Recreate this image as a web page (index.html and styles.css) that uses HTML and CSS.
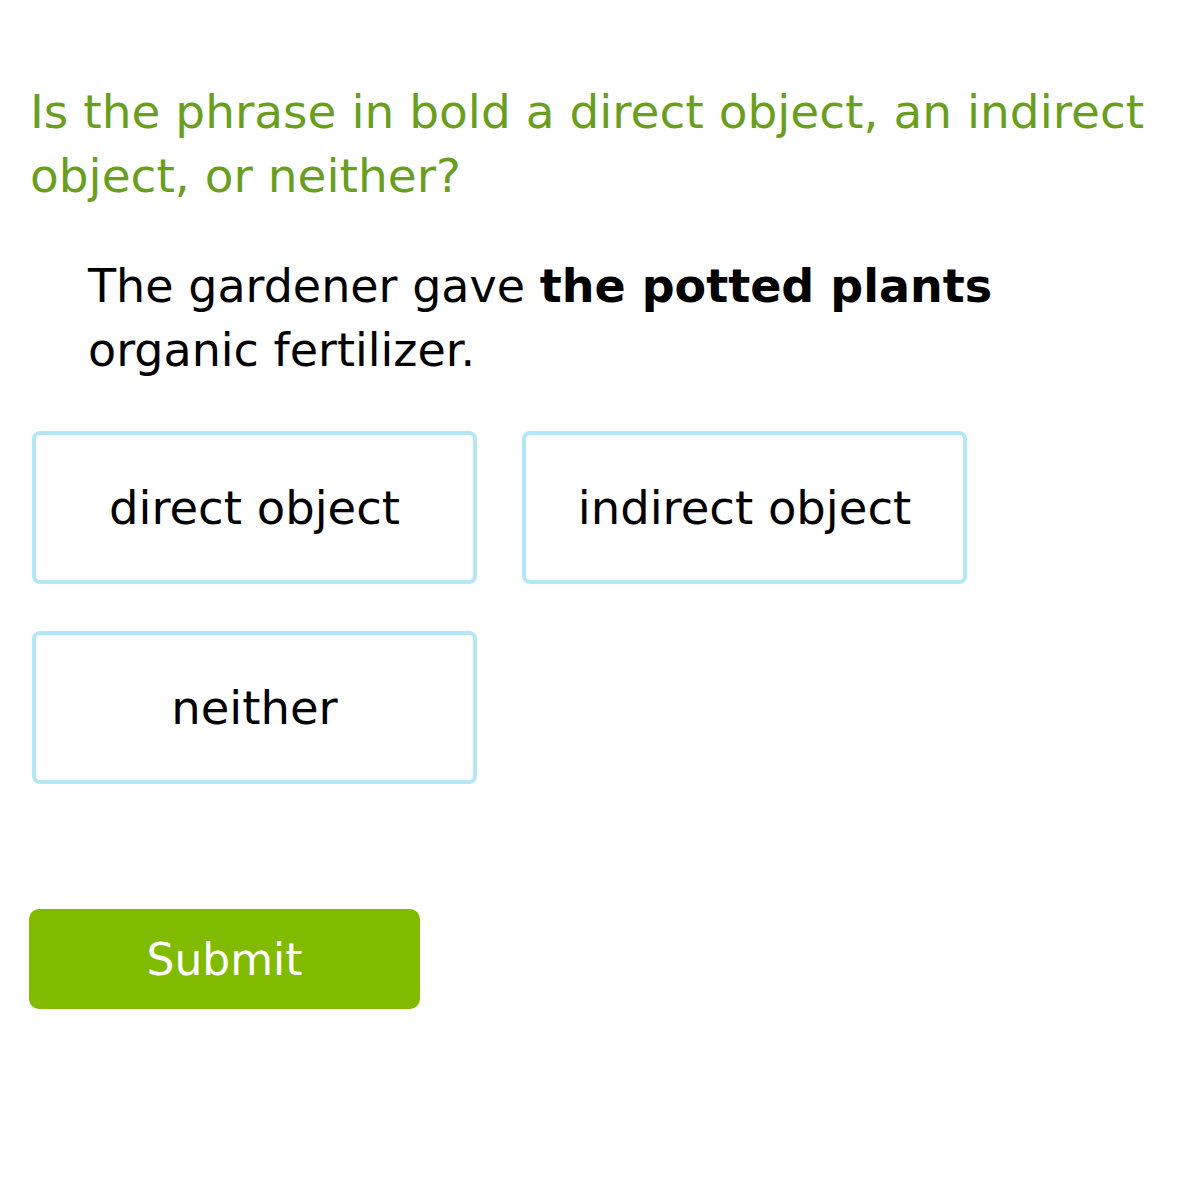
FILE: index.html
```html
<!DOCTYPE html>
<html>
<head>
<meta charset="utf-8">
<link rel="stylesheet" href="styles.css">
</head>
<body>
<div class="page">
  <h1 class="question">Is the phrase in bold a direct object, an indirect object, or neither?</h1>
  <p class="sentence">The gardener gave <b>the potted plants</b> organic fertilizer.</p>
  <div class="choices">
    <div class="choice">direct object</div>
    <div class="choice">indirect object</div>
    <div class="choice">neither</div>
  </div>
  <button class="submit">Submit</button>
</div>
</body>
</html>
```

FILE: styles.css
```css
html, body {
  margin: 0;
  padding: 0;
  background: #fff;
}
body {
  font-family: "DejaVu Sans", Verdana, sans-serif;
}
.page {
  padding: 80px 0 0 30px;
  width: 1150px;
}
.question {
  margin: 0;
  font-weight: normal;
  font-size: 47px;
  line-height: 64px;
  color: #6a9e1f;
}
.sentence {
  margin: 46px 0 0 58px;
  font-size: 46px;
  line-height: 64px;
  color: #000;
  width: 920px;
}
.sentence b {
  font-weight: bold;
}
.choices {
  margin: 49px 0 0 2px;
  display: grid;
  grid-template-columns: 445px 445px;
  column-gap: 45px;
  row-gap: 47px;
}
.choice {
  box-sizing: border-box;
  height: 153px;
  border: 4px solid #b3e7f8;
  border-radius: 8px;
  display: flex;
  align-items: center;
  justify-content: center;
  font-size: 46.5px;
  color: #000;
}
.submit {
  display: block;
  margin: 125px 0 0 -1px;
  width: 391px;
  height: 100px;
  border: none;
  border-radius: 10px;
  background: #80bb00;
  color: #fff;
  font-family: "DejaVu Sans", Verdana, sans-serif;
  font-size: 44px;
  padding: 0;
}
```
